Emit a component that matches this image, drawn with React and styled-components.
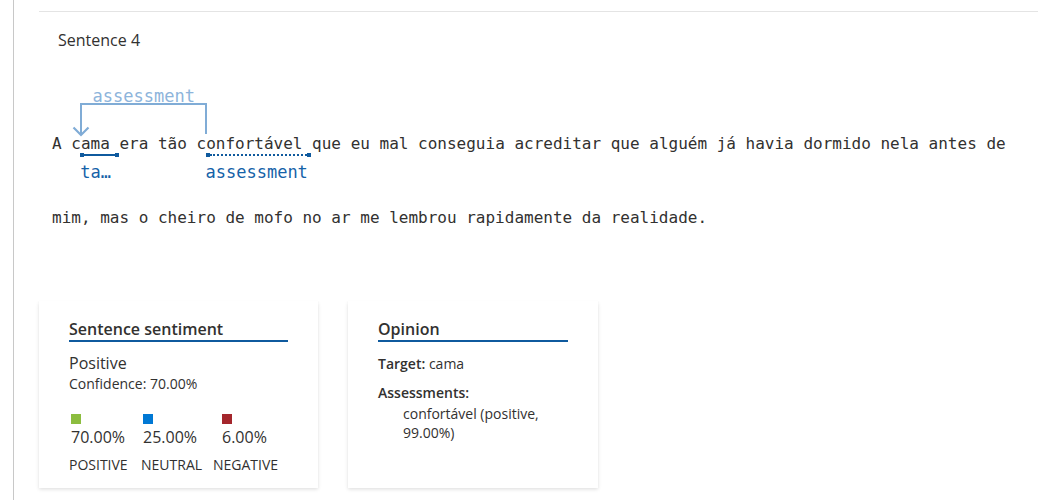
import React from "react";
import styled, { createGlobalStyle } from "styled-components";

const Global = createGlobalStyle`
  html, body { margin: 0; padding: 0; background: #ffffff; }
  body { font-family: "Segoe UI", "Open Sans", sans-serif; color: #323130; }
`;

const Shell = styled.div`
  display: flex;
  min-height: 500px;
  padding-left: 13px;
`;

const Rail = styled.div`
  flex: 1;
  border-left: 1px solid #c8c8c8;
  padding-left: 25px;
`;

const Section = styled.section`
  margin-top: 11px;
  border-top: 1px solid #e4e4e4;
`;

const Heading = styled.h3`
  margin: 17px 0 0;
  padding-left: 19px;
  font-size: 16px;
  font-weight: 400;
  line-height: 22px;
  color: #323130;
`;

const SentenceText = styled.p`
  margin: 56px 0 0;
  padding-left: 13px;
  font-family: "DejaVu Sans Mono", "Liberation Mono", monospace;
  font-size: 16px;
  line-height: 74px;
  color: #323130;
`;

const Annotated = styled.span`
  position: relative;
  display: inline-block;
  line-height: 20px;
`;

const Mark = styled.span`
  position: absolute;
  left: 9px;
  top: 19px;
  width: 100%;
  height: 4px;
  display: flex;
  align-items: center;
`;

const MarkEnd = styled.span`
  width: 4px;
  height: 4px;
  background: #0f5a9e;
  flex: none;
`;

const MarkLine = styled.span`
  flex: 1;
  height: 0;
  border-top: 2px ${(p) => (p.$dotted ? "dotted" : "solid")} #0f5a9e;
`;

const Tag = styled.span`
  position: absolute;
  left: 9px;
  top: 28px;
  width: 100%;
  display: block;
  font-size: 17px;
  line-height: 20px;
  color: #1562a8;
  white-space: nowrap;
  overflow: hidden;
  text-overflow: ellipsis;
`;

const Arc = styled.span`
  position: absolute;
  left: 9px;
  top: -31px;
  width: 127px;
  height: 32px;
  display: block;
`;

const ArcSvg = styled.svg`
  display: block;
  overflow: visible;
`;

const ArcLabel = styled.span`
  position: absolute;
  left: 0;
  right: 0;
  top: -17px;
  text-align: center;
  font-size: 17px;
  line-height: 20px;
  color: #8db4db;
  white-space: nowrap;
`;

const CardRow = styled.div`
  display: flex;
  gap: 30px;
  margin-top: 46px;
`;

const Card = styled.div`
  box-sizing: border-box;
  width: ${(p) => p.$width}px;
  height: 187px;
  padding: 17px 30px;
  background: #ffffff;
  box-shadow: 0 1.6px 3.6px rgba(0, 0, 0, 0.13), 0 0.3px 0.9px rgba(0, 0, 0, 0.11);
`;

const CardTitle = styled.div`
  font-size: 16px;
  font-weight: 600;
  line-height: 22px;
  color: #323130;
  border-bottom: 2px solid #0f5a9e;
`;

const BigText = styled.div`
  margin-top: ${(p) => p.$mt || 0}px;
  font-size: 16px;
  line-height: 22px;
`;

const SmallText = styled.div`
  margin-top: ${(p) => p.$mt || 0}px;
  padding-left: ${(p) => p.$indent || 0}px;
  font-size: 14px;
  line-height: 19px;
  color: #323130;
`;

const Strong = styled.span`
  font-weight: 600;
`;

const ValueGrid = styled.div`
  display: grid;
  grid-template-columns: 72px 79px auto;
  padding-left: 2px;
  margin-top: 21px;
`;

const Value = styled.div`
  display: flex;
  flex-direction: column;
  align-items: flex-start;
  gap: 2px;
`;

const Swatch = styled.span`
  width: 10px;
  height: 10px;
  background: ${(p) => p.$color};
`;

const Pct = styled.span`
  font-size: 16px;
  line-height: 22px;
`;

const LabelGrid = styled.div`
  display: grid;
  grid-template-columns: 72px 72px auto;
  margin-top: 7px;
  font-size: 14px;
  line-height: 19px;
  text-transform: uppercase;
`;

const values = [
  { color: "#8cbd3f", pct: "70.00%", label: "Positive" },
  { color: "#0078d4", pct: "25.00%", label: "Neutral" },
  { color: "#a4262c", pct: "6.00%", label: "Negative" },
];

export default function App() {
  return (
    <>
      <Global />
      <Shell>
        <Rail>
          <Section>
            <Heading>Sentence 4</Heading>
            <SentenceText>
              {"A "}
              <Annotated>
                cama
                <Arc>
                  <ArcSvg width="127" height="32" viewBox="0 0 127 32">
                    <path
                      d="M1 32 V1 H126 V31"
                      fill="none"
                      stroke="#80acd6"
                      strokeWidth="2"
                    />
                    <path
                      d="M-6.5 24.5 L1 32 L8.5 24.5"
                      fill="none"
                      stroke="#80acd6"
                      strokeWidth="2.2"
                    />
                  </ArcSvg>
                  <ArcLabel>assessment</ArcLabel>
                </Arc>
                <Mark>
                  <MarkEnd />
                  <MarkLine />
                  <MarkEnd />
                </Mark>
                <Tag>target</Tag>
              </Annotated>
              {" era tão "}
              <Annotated>
                confortável
                <Mark>
                  <MarkEnd />
                  <MarkLine $dotted />
                  <MarkEnd />
                </Mark>
                <Tag>assessment</Tag>
              </Annotated>
              {
                " que eu mal conseguia acreditar que alguém já havia dormido nela antes de mim, mas o cheiro de mofo no ar me lembrou rapidamente da realidade."
              }
            </SentenceText>
            <CardRow>
              <Card $width={279}>
                <CardTitle>Sentence sentiment</CardTitle>
                <BigText $mt={10}>Positive</BigText>
                <SmallText>Confidence: 70.00%</SmallText>
                <ValueGrid>
                  {values.map((v) => (
                    <Value key={v.label}>
                      <Swatch $color={v.color} />
                      <Pct>{v.pct}</Pct>
                    </Value>
                  ))}
                </ValueGrid>
                <LabelGrid>
                  {values.map((v) => (
                    <span key={v.label}>{v.label}</span>
                  ))}
                </LabelGrid>
              </Card>
              <Card $width={250}>
                <CardTitle>Opinion</CardTitle>
                <SmallText $mt={12}>
                  <Strong>Target:</Strong> cama
                </SmallText>
                <SmallText $mt={10}>
                  <Strong>Assessments:</Strong>
                </SmallText>
                <SmallText $mt={2} $indent={25}>
                  confortável (positive, 99.00%)
                </SmallText>
              </Card>
            </CardRow>
          </Section>
        </Rail>
      </Shell>
    </>
  );
}
